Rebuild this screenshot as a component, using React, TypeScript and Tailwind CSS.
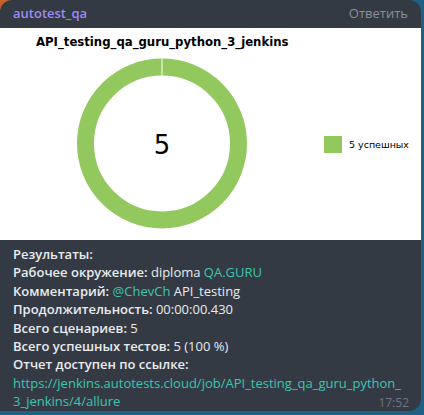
import React from "react";

const font = { fontFamily: '"Open Sans", "Noto Sans", sans-serif' };

function Chart() {
  return (
    <svg width="421" height="212" viewBox="0 0 421 212" style={{ fontFamily: '"DejaVu Sans", sans-serif' }}>
      <text x="36" y="18" fontSize="11.7" fontWeight="bold" fill="#000">
        API_testing_qa_guru_python_3_jenkins
      </text>
      <circle cx="162" cy="115.5" r="76.5" fill="none" stroke="#92c85e" strokeWidth="17" />
      <line x1="162" y1="30" x2="162" y2="48" stroke="#fff" strokeWidth="1" />
      <text x="162" y="126" fontSize="26" textAnchor="middle" fill="#000">5</text>
      <rect x="324" y="108" width="18" height="17" fill="#92c85e" />
      <text x="349" y="120" fontSize="9.5" fill="#000">5 успешных</text>
    </svg>
  );
}

export default function App() {
  const link = "text-[#3cc6b0]";
  return (
    <div className="w-[424px] h-[415px] bg-[radial-gradient(circle_at_0_0,#c4612c_0,#c4612c_14px,#1d6286_15px)] overflow-hidden" style={font}>
      <div className="w-[421px] h-[411px] bg-[#343a44] rounded-tl-[12px] rounded-tr-[12px] rounded-br-[12px] overflow-hidden flex flex-col">
        <div className="h-[28px] flex items-center justify-between px-[13px] text-[13px]">
          <span className="font-semibold text-[#9d8cf2]">autotest_qa</span>
          <span className="text-[#8a9099]">Ответить</span>
        </div>
        <div className="h-[212px] bg-white">
          <Chart />
        </div>
        <div className="relative px-[13px] pt-[5px] text-[13px] leading-[18.4px] text-[#e9ecef]">
          <div className="font-semibold">Результаты:</div>
          <div><span className="font-semibold">Рабочее окружение:</span> diploma <span className={link}>QA.GURU</span></div>
          <div><span className="font-semibold">Комментарий:</span> <span className={link}>@ChevCh</span> API_testing</div>
          <div><span className="font-semibold">Продолжительность:</span> 00:00:00.430</div>
          <div><span className="font-semibold">Всего сценариев:</span> 5</div>
          <div><span className="font-semibold">Всего успешных тестов:</span> 5 (100 %)</div>
          <div className="font-semibold">Отчет доступен по ссылке:</div>
          <div className={`${link} whitespace-nowrap`}>
            https://jenkins.autotests.cloud/job/API_testing_qa_guru_python_
            <br />
            3_jenkins/4/allure
          </div>
          <span className="absolute right-[12px] bottom-[-2px] text-[12px] text-[#6f7682]">17:52</span>
        </div>
      </div>
    </div>
  );
}
